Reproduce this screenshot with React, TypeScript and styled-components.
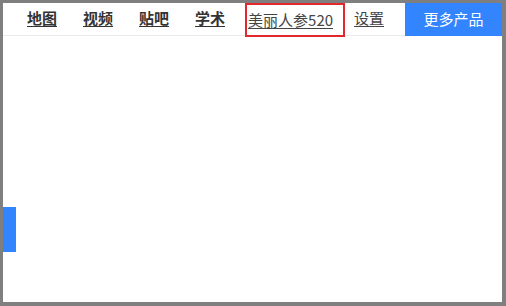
import styled, { createGlobalStyle } from "styled-components";

const GlobalStyle = createGlobalStyle`
  html, body {
    margin: 0;
    padding: 0;
    background: #ffffff;
  }
  body {
    font-family: "Noto Sans CJK SC", "Noto Sans", sans-serif;
  }
`;

const Frame = styled.div`
  position: relative;
  width: 506px;
  height: 306px;
  box-sizing: border-box;
  border-style: solid;
  border-color: #7f7f7f;
  border-width: 3px 4px 4px 3px;
  background: #ffffff;
  overflow: hidden;
`;

const Header = styled.div`
  display: flex;
  align-items: flex-start;
  height: 32px;
  border-bottom: 1px solid #ebebeb;
  padding-left: 24px;
`;

const NavLink = styled.a<{ $bold?: boolean; $gap?: number }>`
  display: flex;
  align-items: center;
  height: 29px;
  margin-left: ${(p) => p.$gap ?? 0}px;
  font-size: 15px;
  font-weight: ${(p) => (p.$bold ? 700 : 400)};
  color: ${(p) => (p.$bold ? "#333333" : "#444444")};
  text-decoration: underline;
  text-underline-offset: 2px;
  white-space: nowrap;
  cursor: pointer;
`;

const Highlight = styled.div`
  display: flex;
  align-items: center;
  box-sizing: border-box;
  height: 34px;
  margin-left: 20px;
  padding: 0 10px 2px 1px;
  border: 2px solid #e2272d;
`;

const MoreButton = styled.button`
  margin-left: auto;
  margin-top: -3px;
  width: 97px;
  height: 36px;
  border: 0;
  background: #3385ff;
  color: #ffffff;
  font-family: "Noto Sans CJK SC", "Noto Sans", sans-serif;
  font-size: 15px;
  cursor: pointer;
`;

const SideTab = styled.div`
  position: absolute;
  left: 0;
  top: 204px;
  width: 13px;
  height: 45px;
  background: #3385ff;
`;

const links = [
  { label: "地图", gap: 0 },
  { label: "视频", gap: 26 },
  { label: "贴吧", gap: 26 },
  { label: "学术", gap: 26 },
];

export default function App() {
  return (
    <>
      <GlobalStyle />
      <Frame>
        <Header>
          {links.map((l) => (
            <NavLink key={l.label} $bold $gap={l.gap}>
              {l.label}
            </NavLink>
          ))}
          <Highlight>
            <NavLink>美丽人参520</NavLink>
          </Highlight>
          <NavLink $gap={9}>设置</NavLink>
          <MoreButton>更多产品</MoreButton>
        </Header>
        <SideTab />
      </Frame>
    </>
  );
}
